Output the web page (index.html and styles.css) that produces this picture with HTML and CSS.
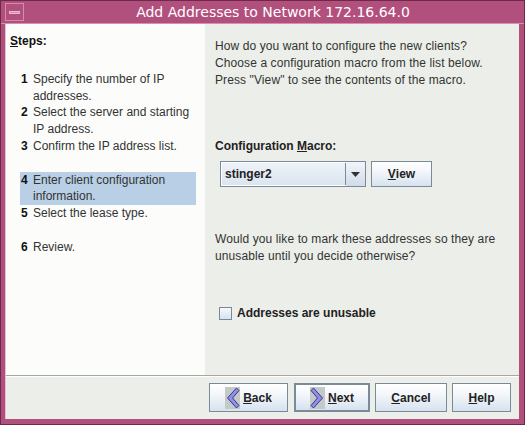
FILE: index.html
```html
<!DOCTYPE html>
<html>
<head>
<meta charset="utf-8">
<link rel="stylesheet" href="styles.css">
</head>
<body>
<div class="window">
  <div class="titlebar">
    <div class="menu-btn"><span class="dash"></span></div>
    <div class="title">Add Addresses to Network 172.16.64.0</div>
  </div>
  <div class="frame">
    <div class="content">
      <div class="steps">
        <div class="steps-head"><u>S</u>teps:</div>
        <ol class="step-list">
          <li class="step"><b>1</b><span>Specify the number of IP addresses.</span></li>
          <li class="step"><b>2</b><span>Select the server and starting IP address.</span></li>
          <li class="step gap-after"><b>3</b><span>Confirm the IP address list.</span></li>
          <li class="step active"><b>4</b><span>Enter client configuration information.</span></li>
          <li class="step gap-after"><b>5</b><span>Select the lease type.</span></li>
          <li class="step"><b>6</b><span>Review.</span></li>
        </ol>
      </div>
      <div class="panel">
        <p class="intro">How do you want to configure the new clients?<br>Choose a configuration macro from the list below.<br>Press "View" to see the contents of the macro.</p>
        <div class="label">Configuration <u>M</u>acro:</div>
        <div class="macro-row">
          <div class="combo">
            <div class="combo-text">stinger2</div>
            <div class="combo-arrow"><svg width="9" height="5" viewBox="0 0 9 5"><path d="M0 0h9L4.5 5z" fill="#333"/></svg></div>
          </div>
          <button class="btn view-btn"><u>V</u>iew</button>
        </div>
        <p class="question">Would you like to mark these addresses so they are<br>unusable until you decide otherwise?</p>
        <label class="check"><span class="box"></span>Addresses are unusable</label>
      </div>
    </div>
    <div class="footer">
      <button class="btn back-btn"><span class="chev"><svg width="14" height="22" viewBox="0 0 14 22"><path d="M10.5 1 L1.5 11 L10.5 21 L13 18.5 L6.5 11 L13 3.5 Z" fill="#8f8ff0" stroke="#3a3a7a" stroke-width="1" stroke-linejoin="miter"/></svg></span><u>B</u>ack</button>
      <button class="btn next-btn"><span class="chev"><svg width="14" height="22" viewBox="0 0 14 22"><path d="M3.5 1 L12.5 11 L3.5 21 L1 18.5 L7.5 11 L1 3.5 Z" fill="#8f8ff0" stroke="#3a3a7a" stroke-width="1" stroke-linejoin="miter"/></svg></span><u>N</u>ext</button>
      <button class="btn cancel-btn"><u>C</u>ancel</button>
      <button class="btn help-btn"><u>H</u>elp</button>
    </div>
  </div>
</div>
</body>
</html>
```

FILE: styles.css
```css
* { box-sizing: border-box; }
html, body { margin: 0; padding: 0; }
body {
  width: 525px;
  height: 425px;
  overflow: hidden;
  font-family: "Liberation Sans", Arial, sans-serif;
  font-size: 12px;
  color: #333;
}
.window {
  width: 525px;
  height: 425px;
  background: #b2507d;
  border: 1px solid #6e2848;
  display: flex;
  flex-direction: column;
}
.titlebar {
  height: 23px;
  display: flex;
  align-items: center;
  padding: 0 4px;
  border-bottom: 1px solid #d890b0;
}
.menu-btn {
  width: 19px;
  height: 18px;
  border: 1px solid #d58cad;
  display: flex;
  align-items: center;
  justify-content: center;
}
.menu-btn .dash {
  width: 11px;
  height: 3px;
  background: #d68fb0;
  border: 1px solid #e8b8cc;
}
.title {
  flex: 1;
  text-align: center;
  color: #fff;
  font-family: "DejaVu Sans", sans-serif;
  font-size: 14px;
  padding-left: 2px;
}
.frame {
  flex: 1;
  margin: 0 5px 5px 4px;
  border-left: 1px solid #e6c0d0;
  display: flex;
  flex-direction: column;
  background: #eceee9;
}
.content {
  height: 352px;
  display: flex;
  border-bottom: 1px solid #a6a8a4;
}
.steps {
  width: 199px;
  background: #fcfdfb;
  padding: 10px 0 0 4px;
}
.steps-head {
  font-weight: bold;
  font-size: 12px;
  color: #111;
  height: 20px;
}
.step-list {
  list-style: none;
  margin: 0;
  padding: 17px 0 0 0;
}
.step {
  display: flex;
  width: 176px;
  margin-left: 10px;
  line-height: 16.7px;
  padding-right: 4px;
}
.step b {
  width: 13px;
  flex: none;
  color: #111;
  padding-left: 1px;
}
.step span { color: #333; }
.step.gap-after { margin-bottom: 17px; }
.step.active { background: #b8cfe5; }
.panel {
  flex: 1;
  padding: 14px 10px 0 10px;
}
.intro, .question {
  margin: 0;
  line-height: 17px;
  color: #333;
  letter-spacing: 0.1px;
}
.label {
  margin-top: 50px;
  font-weight: bold;
  color: #222;
  height: 19px;
}
.macro-row {
  display: flex;
  gap: 5px;
  margin-left: 5px;
  margin-top: 3px;
}
.combo {
  width: 146px;
  height: 26px;
  border: 1px solid #7a8a99;
  display: flex;
  background: #fff;
}
.combo-text {
  flex: 1;
  background: linear-gradient(#eef2f8, #dbe5f0);
  border-right: 1px solid #7a8a99;
  font-weight: bold;
  color: #222;
  padding: 4px 0 0 3px;
  margin: 1px 0 1px 1px;
}
.combo-arrow {
  width: 19px;
  background: linear-gradient(#f2f5fa, #cfdcea);
  display: flex;
  align-items: center;
  justify-content: center;
}
.btn {
  font-family: "Liberation Sans", Arial, sans-serif;
  font-size: 12px;
  font-weight: bold;
  color: #222;
  border: 1px solid #7a8a99;
  background: linear-gradient(#ffffff, #f3f6fa 40%, #d6e2ef);
  height: 26px;
  padding: 0;
  display: flex;
  align-items: center;
  justify-content: center;
}
.view-btn { width: 61px; }
.question { margin-top: 44px; }
.check {
  display: flex;
  align-items: center;
  gap: 5px;
  margin-top: 41px;
  margin-left: 4px;
  font-weight: bold;
  font-size: 12px;
  color: #222;
}
.box {
  width: 13px;
  height: 13px;
  border: 1px solid #7a8a99;
  background: linear-gradient(#f6f8fb, #d6e2ef);
}
.footer {
  flex: 1;
  display: flex;
  align-items: center;
  justify-content: flex-end;
  gap: 5px;
  padding: 0 8px 1px 0;
  border-top: 1px solid #fff;
}
.footer .btn { height: 29px; }
.back-btn { width: 79px; margin-right: 1px; }
.next-btn { width: 76px; border: 2px solid #7a8a99; }
.cancel-btn { width: 72px; }
.help-btn { width: 59px; }
.chev {
  width: 15px;
  height: 22px;
  background: #c4c8c8;
  display: flex;
  align-items: center;
  justify-content: center;
  margin-right: 3px;
}
```
